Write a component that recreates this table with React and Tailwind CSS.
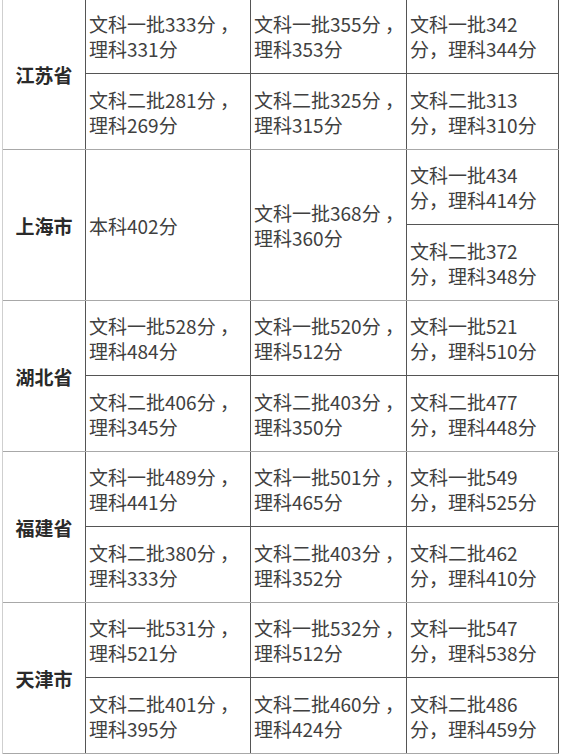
import React from "react";

const provinces = [
  {
    name: "江苏省",
    rows: [
      [["文科一批333分 ，", "理科331分"], ["文科一批355分 ，", "理科353分"], ["文科一批342", "分，理科344分"]],
      [["文科二批281分 ，", "理科269分"], ["文科二批325分 ，", "理科315分"], ["文科二批313", "分，理科310分"]],
    ],
  },
  {
    name: "上海市",
    merged: true,
    a: ["本科402分"],
    b: ["文科一批368分 ，", "理科360分"],
    c: [
      ["文科一批434", "分，理科414分"],
      ["文科二批372", "分，理科348分"],
    ],
  },
  {
    name: "湖北省",
    rows: [
      [["文科一批528分 ，", "理科484分"], ["文科一批520分 ，", "理科512分"], ["文科一批521", "分，理科510分"]],
      [["文科二批406分 ，", "理科345分"], ["文科二批403分 ，", "理科350分"], ["文科二批477", "分，理科448分"]],
    ],
  },
  {
    name: "福建省",
    rows: [
      [["文科一批489分 ，", "理科441分"], ["文科一批501分 ，", "理科465分"], ["文科一批549", "分，理科525分"]],
      [["文科二批380分 ，", "理科333分"], ["文科二批403分 ，", "理科352分"], ["文科二批462", "分，理科410分"]],
    ],
  },
  {
    name: "天津市",
    rows: [
      [["文科一批531分 ，", "理科521分"], ["文科一批532分 ，", "理科512分"], ["文科一批547", "分，理科538分"]],
      [["文科二批401分 ，", "理科395分"], ["文科二批460分 ，", "理科424分"], ["文科二批486", "分，理科459分"]],
    ],
  },
];

const Lines = ({ lines }) => (
  <div className="flex flex-col justify-center h-full pl-[3px]">
    {lines.map((l, i) => (
      <div key={i} className="whitespace-nowrap">
        {l}
      </div>
    ))}
  </div>
);

const Province = ({ p }) => (
  <div className="grid grid-cols-[83px_165px_156px_152px] grid-rows-[75px_75px] border-b border-[#a8a8a8]">
    <div className="row-span-2 border-r border-[#555] flex items-center justify-center font-bold text-[#2a2a2a]">
      {p.name}
    </div>
    {p.merged ? (
      <>
        <div className="row-span-2 border-r border-[#555]">
          <Lines lines={p.a} />
        </div>
        <div className="row-span-2 border-r border-[#555]">
          <Lines lines={p.b} />
        </div>
        <div className="border-r border-b border-[#555]">
          <Lines lines={p.c[0]} />
        </div>
        <div className="border-r border-[#555]">
          <Lines lines={p.c[1]} />
        </div>
      </>
    ) : (
      p.rows.map((row, ri) =>
        row.map((cell, ci) => (
          <div
            key={`${ri}-${ci}`}
            className={ri === 0 ? "border-r border-b border-[#555]" : "border-r border-[#555]"}
          >
            <Lines lines={cell} />
          </div>
        ))
      )
    )}
  </div>
);

export default function App() {
  return (
    <div
      className="w-[562px] h-[755px] overflow-hidden bg-white text-[19px] leading-[25px] text-[#404040]"
      style={{ fontFamily: '"Noto Sans CJK SC", "Noto Sans", sans-serif' }}
    >
      <div className="ml-[2px] mt-[-1px] w-[557px] border-l border-[#cfcfcf]">
        {provinces.map((p) => (
          <Province key={p.name} p={p} />
        ))}
      </div>
    </div>
  );
}
